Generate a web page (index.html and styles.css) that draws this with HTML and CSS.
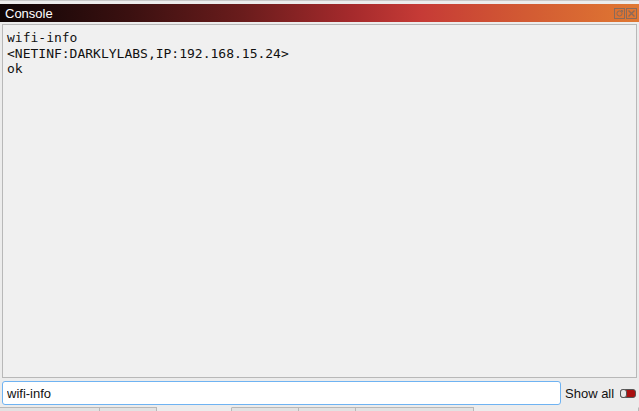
FILE: index.html
```html
<!DOCTYPE html>
<html lang="en">
<head>
    <meta charset="UTF-8">
    <title>Console</title>
    <link rel="stylesheet" href="styles.css">
</head>
<body>

<div class="window">
    <div class="title-bar">
        <span class="title">Console</span>
        <div class="title-icons">
            <svg width="11" height="11" viewBox="0 0 11 11"><rect x="0.5" y="0.5" width="10" height="10" fill="none" stroke="#8a6a5a"/><circle cx="5.5" cy="5.5" r="2.6" fill="none" stroke="#8a6a5a"/><path d="M7 2.5 L8.5 2.5 L8.5 4" fill="none" stroke="#8a6a5a"/></svg>
            <svg width="11" height="11" viewBox="0 0 11 11"><rect x="0.5" y="0.5" width="10" height="10" fill="none" stroke="#8a6a5a"/><path d="M2.5 2.5 L8.5 8.5 M8.5 2.5 L2.5 8.5" stroke="#8a6a5a" stroke-width="1.4"/></svg>
        </div>
    </div>

    <!-- Output -->
    <div class="console-output">
        <div>wifi-info</div>
        <div>&lt;NETINF:DARKLYLABS,IP:192.168.15.24&gt;</div>
        <div>ok</div>
    </div>

    <!-- Input row -->
    <div class="input-row">
        <input type="text" class="cmd-input" value="wifi-info">
        <span class="show-all">Show all</span>
        <span class="toggle"><span class="knob"></span></span>
    </div>

    <div class="tabs">
        <div class="tab" style="width:100px"></div>
        <div class="tab" style="width:57px"></div>
        <div class="tab tab-blank" style="width:75px"></div>
        <div class="tab" style="width:67px"></div>
        <div class="tab" style="width:57px"></div>
        <div class="tab" style="width:118px"></div>
        <div class="tab tab-blank"></div>
    </div>
</div>

</body>
</html>
```

FILE: styles.css
```css
* {
    margin: 0;
    padding: 0;
    box-sizing: border-box;
}
body {
    width: 639px;
    height: 411px;
    overflow: hidden;
    background-color: #ececec;
    font-family: 'Liberation Sans', Arial, sans-serif;
}

.window {
    height: 411px;
    display: flex;
    flex-direction: column;
    padding-top: 3px;
    border-top: 1px solid #c8c8c8;
}

/* Title bar */
.title-bar {
    height: 18px;
    display: flex;
    align-items: center;
    justify-content: space-between;
    padding: 0 5px;
    background: linear-gradient(to right, #0e0505 0%, #3a1010 20%, #6a1c1c 38%, #a52a2c 55%, #c63b36 66%, #d25a33 82%, #e07832 100%);
}
.title {
    color: #fff;
    font-size: 13px;
}
.title-icons {
    display: flex;
    gap: 1px;
    margin-right: -3px;
}

/* Console output */
.console-output {
    flex-grow: 1;
    margin: 2px 2px 0 2px;
    border: 1px solid #b8b8b8;
    background-color: #f0f0f0;
    padding: 5px 4px;
    font-family: 'DejaVu Sans Mono', monospace;
    font-size: 13px;
    line-height: 15.5px;
    color: #111;
}

/* Input row */
.input-row {
    display: flex;
    align-items: center;
    height: 27px;
    padding: 3px 2px 0 2px;
}
.cmd-input {
    width: 559px;
    height: 24px;
    border: 1px solid #6fb3f2;
    border-radius: 3px;
    padding: 0 4px;
    font-family: 'Liberation Sans', Arial, sans-serif;
    font-size: 13px;
    color: #111;
    background: #fff;
    outline: none;
}
.show-all {
    margin-left: 4px;
    font-size: 13px;
    color: #111;
}
.toggle {
    margin-left: 6px;
    width: 16px;
    height: 9px;
    border-radius: 3px;
    background-color: #a81010;
    border: 1px solid #555;
    position: relative;
}
.knob {
    position: absolute;
    left: -1px;
    top: -1px;
    width: 7px;
    height: 9px;
    border-radius: 3px;
    background: #e8e8e8;
    border: 1px solid #555;
}

/* Bottom tabs */
.tabs {
    display: flex;
    height: 4px;
    margin-top: 2px;
}
.tab {
    border-top: 1px solid #b8b8b8;
    border-right: 1px solid #b8b8b8;
    background: #e2e2e2;
}
.tab-blank {
    background: #ececec;
    border-top-color: #ececec;
    flex-grow: 1;
}
.tab-blank:nth-child(3) {
    flex-grow: 0;
    border-right-color: #b8b8b8;
}
```
